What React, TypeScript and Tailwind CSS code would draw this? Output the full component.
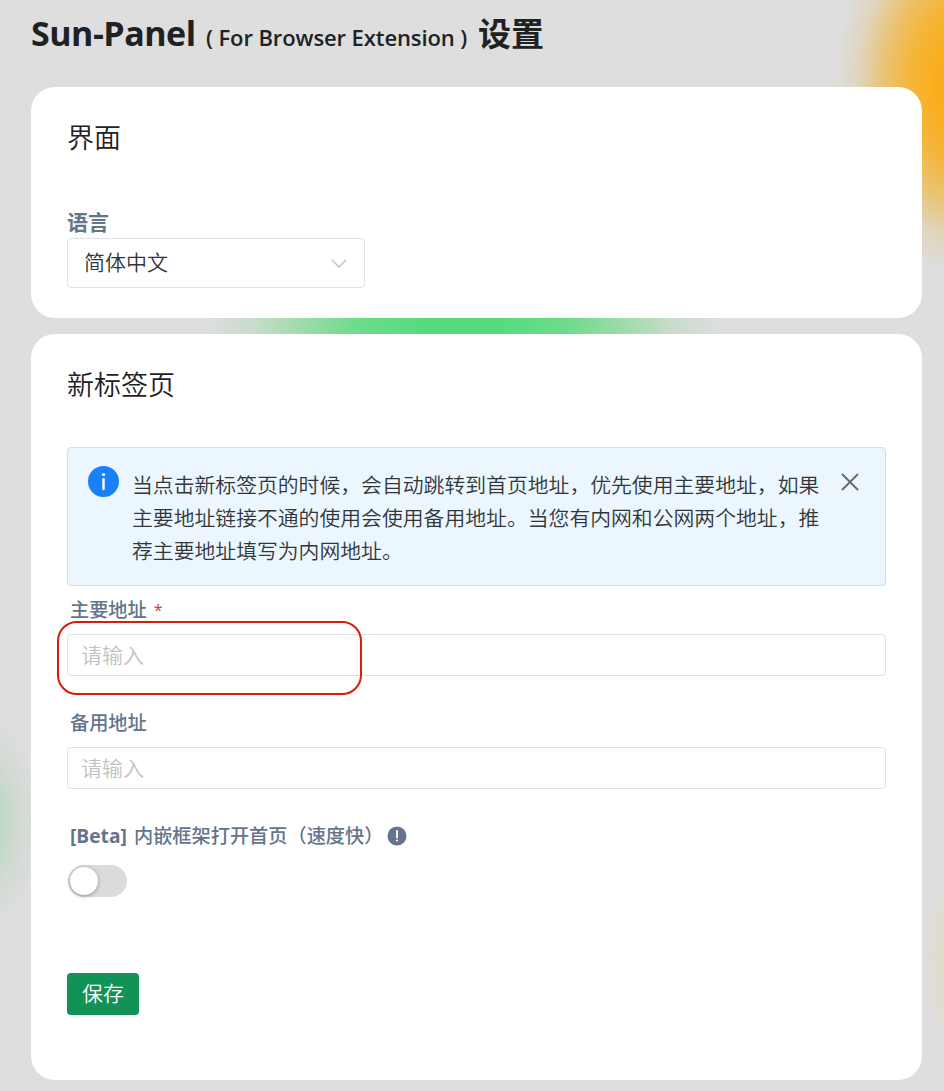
import React, { useState } from "react";
import clsx from "clsx";

interface CardProps {
  title: string;
  children: React.ReactNode;
  className?: string;
}

const Card: React.FC<CardProps> = ({ title, children, className }) => (
  <section className={clsx("rounded-[24px] bg-white px-[36px]", className)}>
    <h2 className="h-[40px] text-[27px] leading-[40px] font-[350] text-[#1f2225]">{title}</h2>
    {children}
  </section>
);

interface FieldProps {
  label: string;
  required?: boolean;
  className?: string;
}

const Field: React.FC<FieldProps> = ({ label, required, className }) => {
  const [value, setValue] = useState("");

  return (
    <label className={clsx("block", className)}>
      <span className="flex h-[28px] items-center gap-[7px] pl-[3px] text-[19.2px] leading-[28px] font-medium text-[#64748b]">
        {label}
        {required && <span className="text-[16px] font-normal text-[#c0404c]">*</span>}
      </span>
      <input
        className="mt-[10px] block h-[42px] w-full rounded-[4px] border border-[#e0e0e6] bg-white px-[13px] text-[21px] font-[350] text-[#333639] outline-none placeholder:text-[#c2c2c2]"
        placeholder="请输入"
        value={value}
        onChange={(e) => setValue(e.target.value)}
      />
    </label>
  );
};

const InfoAlert: React.FC = () => (
  <div className="mt-[42px] flex h-[139px] rounded-[4px] border border-[#c9e0f0] bg-[#ebf6fe] pt-[18px] pl-[20px]">
    <svg className="size-[31px] shrink-0" viewBox="0 0 31 31">
      <circle cx="15.5" cy="15.5" r="15.5" fill="#1a80f8" />
      <circle cx="15.5" cy="8.5" r="1.6" fill="#fff" />
      <path d="M15.5 13.2v9.8" stroke="#fff" strokeWidth="2.4" strokeLinecap="round" />
    </svg>
    <p className="mt-[2.5px] ml-[13px] w-[690px] shrink-0 text-[20.84px] leading-[33.3px] font-[350] whitespace-nowrap text-[#333639]">
      当点击新标签页的时候，会自动跳转到首页地址，优先使用主要地址，如果
      <br />
      主要地址链接不通的使用会使用备用地址。当您有内网和公网两个地址，推
      <br />
      荐主要地址填写为内网地址。
    </p>
    <button className="mt-[7px] ml-[19px] size-[18px]" aria-label="关闭">
      <svg viewBox="0 0 18 18" fill="none" stroke="#666" strokeWidth="1.8" strokeLinecap="round">
        <path d="M1.5 1.5l15 15M16.5 1.5l-15 15" />
      </svg>
    </button>
  </div>
);

// Soft coloured light behind the cards
const Backdrop: React.FC = () => (
  <div className="pointer-events-none absolute inset-0 overflow-hidden">
    <div className="absolute -top-[110px] left-[835px] h-[385px] w-[270px] bg-[radial-gradient(closest-side,#faae1d_0%,#faae1d_26%,#f4b63b_45%,#e9c478_65%,#e0d5bd_82%,#dedede_100%)]" />
    <div className="absolute top-[120px] left-[205px] h-[412px] w-[515px] bg-[radial-gradient(closest-side,#54dc7c_0%,#54dc7c_15%,#70db8c_42%,#9edba9_62%,#c6dcc8_80%,#dedede_100%)]" />
    <div className="absolute top-[710px] -left-[90px] h-[224px] w-[135px] bg-[radial-gradient(closest-side,#a2d7ad_0%,#c0d9c3_35%,#d0dad2_62%,#d9dcda_82%,#dedede_100%)]" />
    <div className="absolute top-[850px] left-[920px] h-[220px] w-[110px] bg-[radial-gradient(closest-side,#eec878_0%,#e1dbc4_50%,#dfdcd0_70%,#dedede_100%)]" />
  </div>
);

const App: React.FC = () => {
  const [embedded, setEmbedded] = useState(false);

  return (
    <div className="relative h-[1091px] w-[944px] overflow-hidden bg-[#dedede] font-['Open_Sans','Noto_Sans_CJK_SC',sans-serif]">
      <Backdrop />
      <main className="relative pr-[22px] pl-[31px]">
        <h1 className="flex h-[87px] items-baseline pt-[9px] leading-[48px] font-bold whitespace-nowrap text-[#1f2225]">
          <span className="w-[175px] text-[34px] tracking-[-0.5px]">Sun-Panel</span>
          <span className="w-[272px] text-[22px] font-semibold tracking-[-0.1px]">( For Browser Extension )</span>
          <span className="text-[33px]">设置</span>
        </h1>

        <Card title="界面" className="h-[231px] pt-[31px]">
          <div className="mt-[49px] h-[31px] text-[21px] leading-[30px] font-bold text-[#64748b]">语言</div>
          <button className="flex h-[50px] w-[298px] items-center justify-between rounded-[4px] border border-[#e0e0e6] bg-white pr-[17px] pl-[16px] text-[21px] font-[350] text-[#333639]">
            简体中文
            <svg className="h-[9px] w-[16px]" viewBox="0 0 16 9" fill="none" stroke="#c2c2c2" strokeWidth="1.5">
              <path d="M.8 .8L8 8l7.2-7.2" />
            </svg>
          </button>
        </Card>

        <Card title="新标签页" className="mt-[16px] h-[746px] pt-[31px]">
          <InfoAlert />

          <div className="relative mt-[10px]">
            <Field label="主要地址" required />
            <div className="pointer-events-none absolute top-[25px] -left-[10px] h-[74px] w-[305px] rounded-[20px] border-2 border-[#d81e06]" />
          </div>
          <Field label="备用地址" className="mt-[33px]" />

          <div className="mt-[33px] flex h-[28px] items-center pl-[3px] text-[19.2px] leading-[28px] font-medium whitespace-nowrap text-[#64748b]">
            <span className="w-[64px] font-bold">[Beta]</span>
            <span className="w-[253px]">内嵌框架打开首页（速度快）</span>
            <svg className="size-[20px]" viewBox="0 0 20 20">
              <circle cx="10" cy="10" r="9.5" fill="#64748b" />
              <path d="M10 4.8v6.7" stroke="#fff" strokeWidth="1.8" strokeLinecap="round" />
              <circle cx="10" cy="14.5" r="1.1" fill="#fff" />
            </svg>
          </div>

          <button
            className="mt-[15px] ml-[1px] flex h-[32px] w-[59px] items-center rounded-full bg-[#dbdbdb] p-[2px]"
            role="switch"
            aria-checked={embedded}
            onClick={() => setEmbedded(!embedded)}
          >
            <span
              className={clsx(
                "size-[28px] rounded-full bg-white shadow-[0_1px_4px_rgba(0,0,0,0.35)]",
                embedded && "translate-x-[27px]"
              )}
            />
          </button>

          <button className="mt-[76px] h-[42px] w-[72px] rounded-[4px] bg-[#129256] text-[21px] font-[350] text-white">
            保存
          </button>
        </Card>
      </main>
    </div>
  );
};

export default App;
